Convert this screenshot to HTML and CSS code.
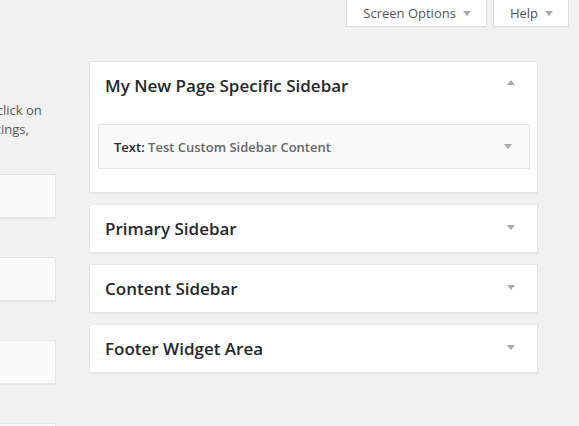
FILE: index.html
```html
<!DOCTYPE html>
<html>
<head>
<meta charset="utf-8">
<link rel="stylesheet" href="styles.css">
</head>
<body>
<div class="topbar">
  <button class="meta-tab">Screen Options<span class="arrow-down"></span></button>
  <button class="meta-tab">Help<span class="arrow-down"></span></button>
</div>
<div class="main">
  <div class="inactive">
    <p class="desc">To activate a widget drag it to a sidebar or click on<br>it. To deactivate a widget and delete its settings,<br>drag it back.</p>
    <div class="avail-widget"></div>
    <div class="avail-widget"></div>
    <div class="avail-widget"></div>
    <div class="avail-widget"></div>
  </div>
  <div class="sidebars">
    <div class="sidebar open">
      <div class="sidebar-name">
        <h2>My New Page Specific Sidebar</h2>
        <span class="arrow-up"></span>
      </div>
      <div class="sortables">
        <div class="widget">
          <div class="widget-title"><strong>Text:</strong> <span class="in-title">Test Custom Sidebar Content</span></div>
          <span class="arrow-down"></span>
        </div>
      </div>
    </div>
    <div class="sidebar">
      <div class="sidebar-name">
        <h2>Primary Sidebar</h2>
        <span class="arrow-down"></span>
      </div>
    </div>
    <div class="sidebar">
      <div class="sidebar-name">
        <h2>Content Sidebar</h2>
        <span class="arrow-down"></span>
      </div>
    </div>
    <div class="sidebar">
      <div class="sidebar-name">
        <h2>Footer Widget Area</h2>
        <span class="arrow-down"></span>
      </div>
    </div>
  </div>
</div>
</body>
</html>
```

FILE: styles.css
```css
html, body {
  margin: 0;
  padding: 0;
  background: #f1f1f1;
  font-family: "Open Sans", "Noto Sans", sans-serif;
  overflow: hidden;
  height: 426px;
}

.topbar {
  display: flex;
  justify-content: flex-end;
  gap: 6px;
  padding-right: 10px;
  height: 27px;
}

.meta-tab {
  display: flex;
  align-items: center;
  height: 27px;
  box-sizing: border-box;
  padding: 0 15px 0 16px;
  margin: 0;
  background: #fff;
  border: 1px solid #ddd;
  border-top: none;
  box-shadow: 0 1px 1px -1px rgba(0,0,0,0.1);
  font-family: "Open Sans", "Noto Sans", sans-serif;
  font-size: 13px;
  color: #555;
  line-height: 26px;
}

.meta-tab .arrow-down {
  margin-left: 7px;
}

.arrow-down, .arrow-up {
  display: inline-block;
  width: 0;
  height: 0;
  border-left: 4px solid transparent;
  border-right: 4px solid transparent;
}
.arrow-down {
  border-top: 5px solid #a8a8a8;
}
.arrow-up {
  border-bottom: 5px solid #a8a8a8;
}

.main {
  display: flex;
  gap: 33px;
}

.inactive {
  flex: 0 0 400px;
  min-width: 0;
  margin-left: -344px;
  display: flex;
  flex-direction: column;
  overflow: hidden;
}

.desc {
  margin: 74px 0 0 0;
  font-size: 13px;
  line-height: 19px;
  color: #555;
  white-space: nowrap;
  padding-left: 84px;
}

.avail-widget {
  height: 44px;
  box-sizing: border-box;
  background: #fafafa;
  border: 1px solid #e5e5e5;
  box-shadow: 0 1px 1px rgba(0,0,0,0.04);
  margin-top: 39px;
}
.desc + .avail-widget {
  margin-top: 16px;
}

.sidebars {
  flex: 0 0 449px;
  padding-top: 34px;
  display: flex;
  flex-direction: column;
  gap: 11px;
}

.sidebar {
  background: #fff;
  border: 1px solid #e5e5e5;
  box-shadow: 0 1px 1px rgba(0,0,0,0.04);
}

.sidebar-name {
  display: flex;
  align-items: center;
  justify-content: space-between;
  height: 47px;
  padding: 0 22px 0 15px;
}
.sidebar-name .arrow-up {
  margin-top: -6px;
}
.sidebar-name .arrow-down {
  margin-top: -2px;
}

.sidebar-name h2 {
  margin: 0;
  font-size: 17px;
  font-weight: 600;
  color: #23282d;
  line-height: 20px;
}

.sortables {
  padding: 15px 7px 23px 8px;
}

.widget {
  display: flex;
  align-items: center;
  justify-content: space-between;
  height: 43px;
  background: #fafafa;
  border: 1px solid #e5e5e5;
  padding: 0 17px 0 15px;
}

.widget-title {
  font-size: 13px;
  font-weight: 600;
  color: #23282d;
}
.widget-title strong {
  font-weight: 600;
}
.in-title {
  color: #666;
}
```
